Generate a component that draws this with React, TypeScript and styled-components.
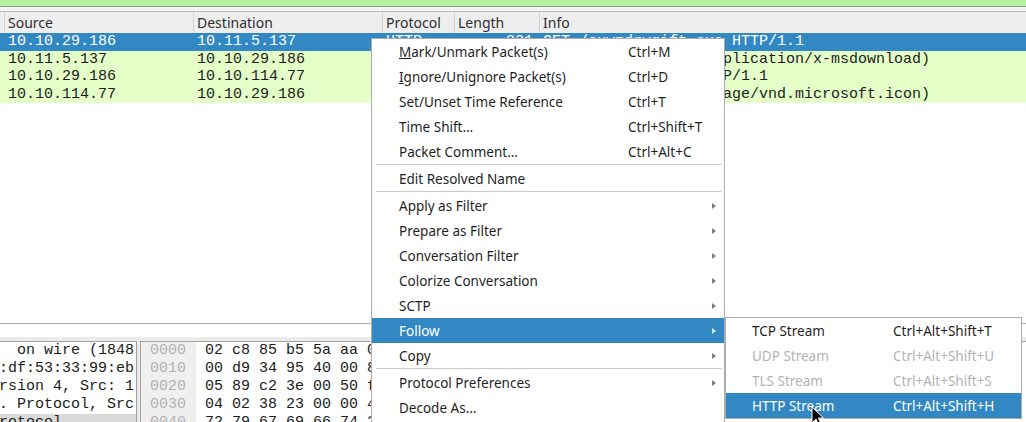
import React from 'react';
import styled, { createGlobalStyle } from 'styled-components';

const GlobalStyle = createGlobalStyle`
  html, body { margin: 0; padding: 0; background: #fff; overflow: hidden; }
  * { box-sizing: border-box; }
`;

const Screen = styled.div`
  position: relative;
  width: 1026px;
  height: 422px;
  overflow: hidden;
  background: #fff;
  display: flex;
  flex-direction: column;
  font-family: "Noto Sans", sans-serif;
`;

const FilterBar = styled.div`
  flex: none;
  height: 7px;
  background: #b7f1a6;
  border-bottom: 1px solid #8fa48c;
`;

const ToolGap = styled.div`
  flex: none;
  height: 5px;
  background: #f3f3f3;
  border-bottom: 1px solid #b9b9b9;
`;

const COLS = '189px 189px 72px 85px 1fr';

const HeaderRow = styled.div`
  flex: none;
  display: grid;
  grid-template-columns: ${COLS};
  height: 21px;
  padding-left: 4px;
  background: #eeeeee;
  font-size: 14px;
  line-height: 21px;
  color: #2e2e2e;
`;

const HeaderCell = styled.div`
  padding-left: 3px;
  border-left: 1px solid #d2d2d2;
  white-space: nowrap;
  overflow: hidden;
`;

const PacketList = styled.div`
  flex: none;
  height: 291px;
  border-bottom: 1px solid #a9a9a9;
  background: #fff;
`;

const Row = styled.div<{ $selected?: boolean }>`
  display: grid;
  grid-template-columns: ${COLS};
  height: 17.5px;
  padding-left: 4px;
  background: ${(p) => (p.$selected ? '#3288c2' : '#e4ffc7')};
  color: ${(p) => (p.$selected ? '#ffffff' : '#1c1c1c')};
  font-family: "Liberation Mono", monospace;
  font-size: 15px;
  line-height: 17.5px;
  white-space: pre;
`;

const Cell = styled.div<{ $right?: boolean }>`
  padding-left: 4px;
  padding-right: ${(p) => (p.$right ? '6px' : '0')};
  text-align: ${(p) => (p.$right ? 'right' : 'left')};
  overflow: hidden;
`;

const ScrollStrip = styled.div`
  flex: none;
  height: 13px;
  background: #fff;
`;

const Splitter = styled.div`
  flex: none;
  height: 4px;
  background: #ececec;
`;

const Panes = styled.div`
  flex: none;
  height: 100px;
  display: flex;
  gap: 3px;
  background: #ececec;
`;

const DetailPane = styled.div`
  width: 137px;
  flex: none;
  background: #fff;
  border-top: 1px solid #a3a3a3;
  border-right: 1px solid #a3a3a3;
  overflow: hidden;
  font-family: "Liberation Mono", monospace;
  font-size: 15px;
  line-height: 18px;
  color: #1c1c1c;
`;

const DetailLine = styled.div<{ $selected?: boolean }>`
  height: 18px;
  margin-left: -1px;
  white-space: pre;
  overflow: hidden;
  background: ${(p) => (p.$selected ? '#dadada' : 'transparent')};
`;

const HexPane = styled.div`
  flex: 1;
  display: flex;
  background: #fff;
  border-top: 1px solid #a3a3a3;
  border-left: 1px solid #a3a3a3;
  overflow: hidden;
  font-family: "Liberation Mono", monospace;
  font-size: 15px;
  line-height: 18px;
`;

const OffsetCol = styled.div`
  width: 55px;
  flex: none;
  padding-left: 9px;
  background: #efefef;
  color: #b2b2b2;
`;

const HexCol = styled.div`
  padding-left: 9px;
  color: #1c1c1c;
  white-space: pre;
`;

const Menu = styled.div<{ $left: number; $top: number; $width: number }>`
  position: absolute;
  left: ${(p) => p.$left}px;
  top: ${(p) => p.$top}px;
  width: ${(p) => p.$width}px;
  background: #fff;
  border: 1px solid #acacac;
  font-family: "Noto Sans", sans-serif;
  font-size: 13.5px;
  color: #1f1f1f;
`;

const MenuItem = styled.div<{ $active?: boolean; $disabled?: boolean; $pad: number; $label: number }>`
  height: 25px;
  display: grid;
  grid-template-columns: ${(p) => p.$label}px 1fr 12px;
  align-items: center;
  padding-left: ${(p) => p.$pad}px;
  white-space: nowrap;
  background: ${(p) => (p.$active ? '#3288c2' : 'transparent')};
  color: ${(p) => (p.$active ? '#ffffff' : p.$disabled ? '#b3b3b3' : '#1f1f1f')};
`;

const Sep = styled.div`
  height: 2px;
  margin: 0 2px 0 4px;
  border-top: 1px solid #c9c9c9;
`;

const Arrow = styled.span<{ $active?: boolean }>`
  width: 0;
  height: 0;
  border-top: 3.5px solid transparent;
  border-bottom: 3.5px solid transparent;
  border-left: 4px solid ${(p) => (p.$active ? '#d6e6f2' : '#7d7d7d')};
`;

const Cursor = styled.svg`
  position: absolute;
  left: 811px;
  top: 406px;
`;

const rows = [
  { src: '10.10.29.186', dst: '10.11.5.137', proto: 'HTTP', len: '231', info: 'GET /ouwzdrygift.exe HTTP/1.1', selected: true },
  { src: '10.11.5.137', dst: '10.10.29.186', proto: 'HTTP', len: '1514', info: 'HTTP/1.1 200 OK  (application/x-msdownload)' },
  { src: '10.10.29.186', dst: '10.10.114.77', proto: 'HTTP', len: '412', info: 'GET /favicon.ico HTTP/1.1' },
  { src: '10.10.114.77', dst: '10.10.29.186', proto: 'HTTP', len: '1142', info: 'HTTP/1.1 200 OK  (image/vnd.microsoft.icon)' },
];

// Only the horizontally scrolled, visible slice of the detail tree.
const details = [
  '  on wire (1848',
  ':df:53:33:99:eb',
  'rsion 4, Src: 1',
  '. Protocol, Src',
  'rotocol',
];

const hex = [
  ['0000', '02 c8 85 b5 5a aa 0'],
  ['0010', '00 d9 34 95 40 00 8'],
  ['0020', '05 89 c2 3e 00 50 f'],
  ['0030', '04 02 38 23 00 00 4'],
  ['0040', '72 79 67 69 66 74 2'],
];

type Entry =
  | { sep: true }
  | { label: React.ReactNode; shortcut?: string; sub?: boolean; active?: boolean; disabled?: boolean };

const mainMenu: Entry[] = [
  { label: <><u>M</u>ark/Unmark Packet(s)</>, shortcut: 'Ctrl+M' },
  { label: <><u>I</u>gnore/Unignore Packet(s)</>, shortcut: 'Ctrl+D' },
  { label: 'Set/Unset Time Reference', shortcut: 'Ctrl+T' },
  { label: 'Time Shift…', shortcut: 'Ctrl+Shift+T' },
  { label: 'Packet Comment…', shortcut: 'Ctrl+Alt+C' },
  { sep: true },
  { label: 'Edit Resolved Name' },
  { sep: true },
  { label: 'Apply as Filter', sub: true },
  { label: 'Prepare as Filter', sub: true },
  { label: 'Conversation Filter', sub: true },
  { label: 'Colorize Conversation', sub: true },
  { label: 'SCTP', sub: true },
  { label: 'Follow', sub: true, active: true },
  { label: 'Copy', sub: true },
  { sep: true },
  { label: 'Protocol Preferences', sub: true },
  { label: 'Decode As…' },
  { label: 'Show Packet in New Window' },
];

const followMenu: Entry[] = [
  { label: 'TCP Stream', shortcut: 'Ctrl+Alt+Shift+T' },
  { label: 'UDP Stream', shortcut: 'Ctrl+Alt+Shift+U', disabled: true },
  { label: 'TLS Stream', shortcut: 'Ctrl+Alt+Shift+S', disabled: true },
  { label: 'HTTP Stream', shortcut: 'Ctrl+Alt+Shift+H', active: true },
];

function renderMenu(entries: Entry[], pad: number, label: number) {
  return entries.map((e, i) =>
    'sep' in e ? (
      <Sep key={i} />
    ) : (
      <MenuItem key={i} $active={e.active} $disabled={e.disabled} $pad={pad} $label={label}>
        <span>{e.label}</span>
        <span>{e.shortcut}</span>
        {e.sub ? <Arrow $active={e.active} /> : <span />}
      </MenuItem>
    )
  );
}

export default function App() {
  return (
    <>
      <GlobalStyle />
      <Screen>
        <FilterBar />
        <ToolGap />
        <HeaderRow>
          <HeaderCell>Source</HeaderCell>
          <HeaderCell>Destination</HeaderCell>
          <HeaderCell>Protocol</HeaderCell>
          <HeaderCell>Length</HeaderCell>
          <HeaderCell>Info</HeaderCell>
        </HeaderRow>
        <PacketList>
          {rows.map((r, i) => (
            <Row key={i} $selected={r.selected}>
              <Cell>{r.src}</Cell>
              <Cell>{r.dst}</Cell>
              <Cell>{r.proto}</Cell>
              <Cell $right>{r.len}</Cell>
              <Cell>{r.info}</Cell>
            </Row>
          ))}
        </PacketList>
        <ScrollStrip />
        <Splitter />
        <Panes>
          <DetailPane>
            {details.map((d, i) => (
              <DetailLine key={i} $selected={i === 4}>{d}</DetailLine>
            ))}
          </DetailPane>
          <HexPane>
            <OffsetCol>
              {hex.map(([o]) => (
                <div key={o}>{o}</div>
              ))}
            </OffsetCol>
            <HexCol>
              {hex.map(([o, b]) => (
                <div key={o}>{b}</div>
              ))}
            </HexCol>
          </HexPane>
        </Panes>

        <Menu $left={371} $top={38} $width={354}>
          {renderMenu(mainMenu, 27, 229)}
        </Menu>
        <Menu $left={725} $top={317} $width={297}>
          {renderMenu(followMenu, 26, 141)}
        </Menu>

        <Cursor width="14" height="22" viewBox="0 0 14 22">
          <path d="M1 1 L1 17 L5 13 L8 20 L10.5 19 L7.5 12 L12.5 12 Z" fill="#000" stroke="#fff" strokeWidth="1" strokeLinejoin="round" />
        </Cursor>
      </Screen>
    </>
  );
}
